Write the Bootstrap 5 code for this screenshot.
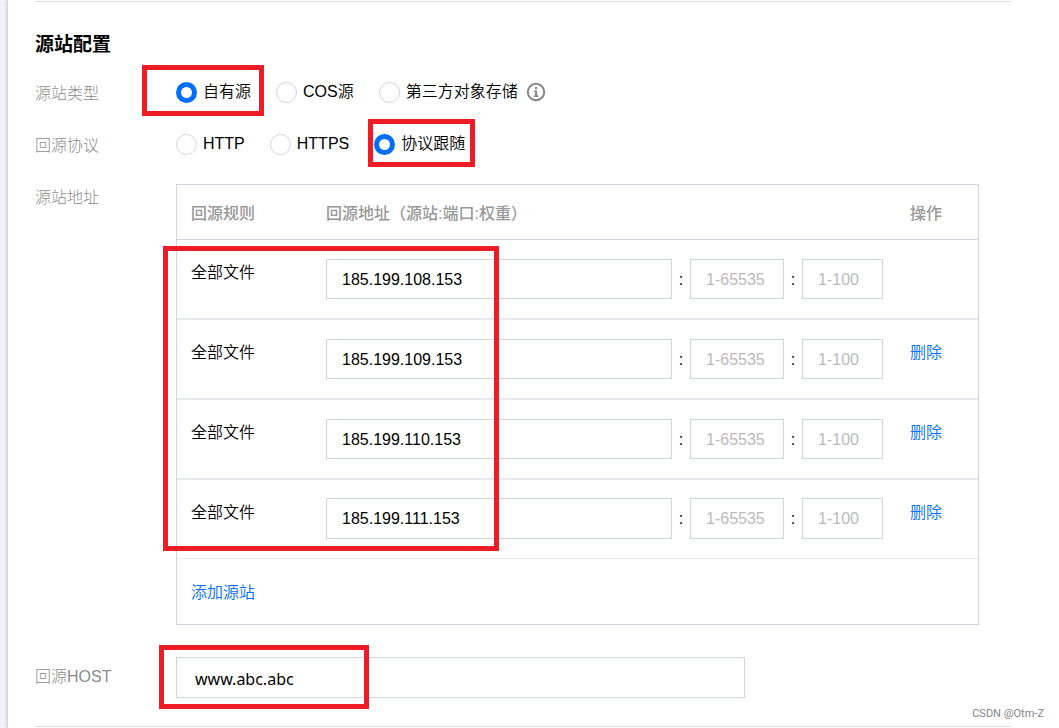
<!DOCTYPE html>
<html lang="zh-CN">
<head>
<meta charset="utf-8">
<meta name="viewport" content="width=device-width, initial-scale=1">
<title>源站配置</title>
<link href="https://cdn.jsdelivr.net/npm/bootstrap@5.3.0/dist/css/bootstrap.min.css" rel="stylesheet">
<style>
  body { font: 350 16px/24px "Liberation Sans", "Noto Sans CJK SC", sans-serif; color: #000; background: #f1f2f7; }
  .panel { margin-left: 8px; padding: 1px 48px 0 27px; background: #fff; box-shadow: 0 0 4px rgba(0, 0, 0, .3); }
  .rule-line { height: 1px; background: #ddd; }
  .section-title { font-size: 19px; line-height: 28px; font-weight: 700; margin: 29px 0 21px; }
  .field { padding-right: 32px; }
  .field-label { width: 141px; flex: none; padding-top: 2px; font-weight: 300; color: #8c8c8c; }
  .options { gap: 25px; height: 52px; }
  .option { position: relative; display: flex; align-items: center; gap: 6px; height: 24px; }
  .option .form-check-input { width: 21px; height: 21px; margin: 0; flex: none; border: 1px solid #cfd5de; background: #fff; }
  .option .form-check-input:checked { border: 5px solid #006eff; background: #fff; }
  .info { margin-left: 2px; flex: none; }
  .origin { width: 100%; border: 1px solid #cfd5de; border-collapse: separate; border-spacing: 0; table-layout: fixed; }
  .origin th, .origin td { padding: 21px 14px 0; vertical-align: top; }
  .origin th { height: 55px; padding-top: 17px; font-weight: 500; color: #999; border-bottom: 1px solid #cfd5de; }
  .origin tbody td { height: 80px; border-bottom: 2px solid #e7eaef; }
  .origin tbody td.addr { padding-top: 19px; padding-right: 13px; }
  .origin tbody tr:last-child td { height: 79px; border-bottom-width: 1px; }
  .origin tbody tr:last-child td.addr { padding-top: 18px; }
  .origin tfoot td { height: 65px; padding-top: 22px; }
  .col-rule { width: 135px; }
  .col-action { width: 82px; }
  .origin a { color: #006eff; text-decoration: none; }
  .box-input { height: 40px; padding: 1px 15px 0; border: 1px solid #cfd5de; border-radius: 0; font: inherit; color: #000; min-width: 0; }
  .box-input::placeholder { color: #bbb; opacity: 1; }
  .origin tbody tr:last-child .box-input { height: 41px; }
  .port { width: 94px; flex: none; }
  .weight { width: 81px; flex: none; }
  .colon { width: 18px; flex: none; text-align: center; line-height: 42px; height: 40px; }
  .host { max-width: 569px; height: 41px; padding: 2px 18px 0; font-family: "Noto Sans", sans-serif; font-weight: 400; }
  /* red annotation frames laid over the form */
  .frame { position: absolute; border: 5px solid #ee1c24; pointer-events: none; }
  .frame-own { inset: -15px -13px -12px -34px; }
  .frame-follow { inset: -13px -10px -11px -6px; }
  .frame-origin { left: -13px; top: 62px; width: 336px; bottom: 74px; }
  .frame-host { left: -17px; top: -12px; width: 210px; bottom: -11px; }
  .watermark { position: absolute; right: 15px; bottom: 6px; font: 11px/16px Roboto, sans-serif; color: #858585; }
</style>
</head>
<body>
<main class="panel min-vh-100">
  <div class="rule-line"></div>
  <h2 class="section-title">源站配置</h2>
  <form>
    <div class="field d-flex" role="radiogroup" aria-labelledby="l-type">
      <div class="field-label" id="l-type">源站类型</div>
      <div class="options d-flex">
        <div class="option"><input class="form-check-input" type="radio" name="type" id="own" checked><label for="own">自有源</label><span class="frame frame-own"></span></div>
        <div class="option"><input class="form-check-input" type="radio" name="type" id="cos"><label for="cos">COS源</label></div>
        <div class="option"><input class="form-check-input" type="radio" name="type" id="third"><label for="third">第三方对象存储</label>
          <svg class="info" width="20" height="20" viewBox="0 0 20 20" aria-hidden="true"><circle cx="10" cy="10" r="8.2" fill="none" stroke="#888" stroke-width="2"/><path d="M9 5h2.2v2H9zM7.8 8.4h3.4v5h1.3V15H7.6v-1.6H9V10H7.8z" fill="#888"/></svg>
        </div>
      </div>
    </div>
    <div class="field d-flex" role="radiogroup" aria-labelledby="l-proto">
      <div class="field-label" id="l-proto">回源协议</div>
      <div class="options d-flex">
        <div class="option"><input class="form-check-input" type="radio" name="proto" id="http"><label for="http">HTTP</label></div>
        <div class="option"><input class="form-check-input" type="radio" name="proto" id="https"><label for="https">HTTPS</label></div>
        <div class="option"><input class="form-check-input" type="radio" name="proto" id="follow" checked><label for="follow">协议跟随</label><span class="frame frame-follow"></span></div>
      </div>
    </div>
    <div class="field d-flex">
      <div class="field-label">源站地址</div>
      <div class="position-relative flex-grow-1">
        <table class="origin">
          <colgroup><col class="col-rule"><col><col class="col-action"></colgroup>
          <thead><tr><th scope="col">回源规则</th><th scope="col">回源地址（源站:端口:权重）</th><th scope="col">操作</th></tr></thead>
          <tbody>
            <tr><td>全部文件</td><td class="addr"><div class="d-flex"><input class="box-input flex-grow-1" aria-label="源站" value="185.199.108.153"><span class="colon">:</span><input class="box-input port" aria-label="端口" placeholder="1-65535"><span class="colon">:</span><input class="box-input weight" aria-label="权重" placeholder="1-100"></div></td><td></td></tr>
            <tr><td>全部文件</td><td class="addr"><div class="d-flex"><input class="box-input flex-grow-1" aria-label="源站" value="185.199.109.153"><span class="colon">:</span><input class="box-input port" aria-label="端口" placeholder="1-65535"><span class="colon">:</span><input class="box-input weight" aria-label="权重" placeholder="1-100"></div></td><td><a href="#">删除</a></td></tr>
            <tr><td>全部文件</td><td class="addr"><div class="d-flex"><input class="box-input flex-grow-1" aria-label="源站" value="185.199.110.153"><span class="colon">:</span><input class="box-input port" aria-label="端口" placeholder="1-65535"><span class="colon">:</span><input class="box-input weight" aria-label="权重" placeholder="1-100"></div></td><td><a href="#">删除</a></td></tr>
            <tr><td>全部文件</td><td class="addr"><div class="d-flex"><input class="box-input flex-grow-1" aria-label="源站" value="185.199.111.153"><span class="colon">:</span><input class="box-input port" aria-label="端口" placeholder="1-65535"><span class="colon">:</span><input class="box-input weight" aria-label="权重" placeholder="1-100"></div></td><td><a href="#">删除</a></td></tr>
          </tbody>
          <tfoot><tr><td colspan="3"><a href="#">添加源站</a></td></tr></tfoot>
        </table>
        <span class="frame frame-origin"></span>
      </div>
    </div>
    <div class="field d-flex mt-4 pt-2">
      <label class="field-label pt-2" for="host">回源HOST</label>
      <div class="position-relative flex-grow-1">
        <input class="box-input host d-block w-100" id="host" value="www.abc.abc">
        <span class="frame frame-host"></span>
      </div>
    </div>
  </form>
  <div class="pt-1"><div class="rule-line mt-4"></div></div>
</main>
<div class="watermark">CSDN @Otm-Z</div>
<script src="https://cdn.jsdelivr.net/npm/bootstrap@5.3.0/dist/js/bootstrap.bundle.min.js"></script>
</body>
</html>
